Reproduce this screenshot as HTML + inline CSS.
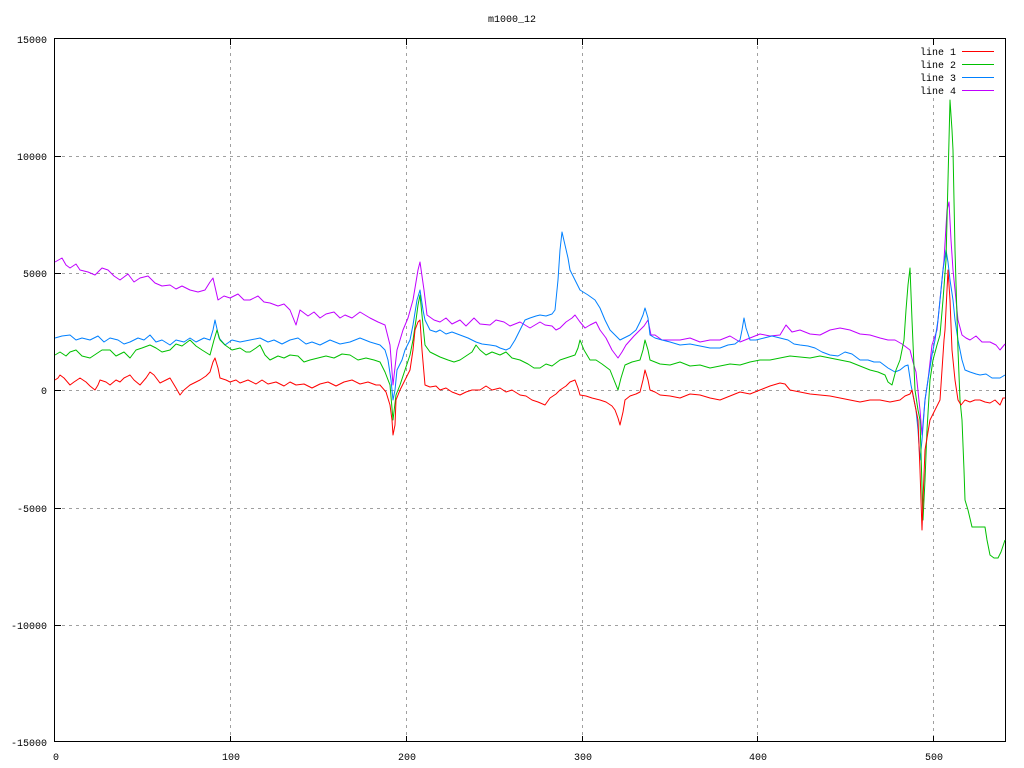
<!DOCTYPE html>
<html><head><meta charset="utf-8"><style>
html,body{margin:0;padding:0;background:#fff;}
svg{display:block;font-family:"Liberation Mono",monospace;font-size:10px;}
</style></head><body>
<svg width="1024" height="768" viewBox="0 0 1024 768" xmlns="http://www.w3.org/2000/svg">
<rect width="1024" height="768" fill="#fff"/>
<g stroke="#a0a0a0" stroke-width="1" stroke-dasharray="3,4" fill="none">
<line x1="55" y1="156.5" x2="1005" y2="156.5"/>
<line x1="55" y1="273.5" x2="1005" y2="273.5"/>
<line x1="55" y1="390.5" x2="1005" y2="390.5"/>
<line x1="55" y1="508.5" x2="1005" y2="508.5"/>
<line x1="55" y1="625.5" x2="1005" y2="625.5"/>
<line x1="230.5" y1="39" x2="230.5" y2="742"/>
<line x1="406.5" y1="39" x2="406.5" y2="742"/>
<line x1="582.5" y1="39" x2="582.5" y2="742"/>
<line x1="757.5" y1="39" x2="757.5" y2="742"/>
<line x1="933.5" y1="98" x2="933.5" y2="742"/>
</g>
<g stroke="#000" stroke-width="1" fill="none">
<rect x="54.5" y="38.5" width="951" height="703"/>
<path d="M55 156.5h6M999 156.5h6M55 273.5h6M999 273.5h6M55 390.5h6M999 390.5h6M55 508.5h6M999 508.5h6M55 625.5h6M999 625.5h6
M230.5 39v6M230.5 742v-6M406.5 39v6M406.5 742v-6M582.5 39v6M582.5 742v-6M757.5 39v6M757.5 742v-6M933.5 39v6M933.5 742v-6"/>
</g>
<g fill="#000" text-anchor="end">
<text x="47" y="43">15000</text><text x="47" y="160">10000</text><text x="47" y="277">5000</text>
<text x="47" y="394">0</text><text x="47" y="512">-5000</text><text x="47" y="629">-10000</text><text x="47" y="746">-15000</text>
</g>
<g fill="#000" text-anchor="middle">
<text x="56" y="760">0</text><text x="231" y="760">100</text><text x="407" y="760">200</text>
<text x="583" y="760">300</text><text x="758" y="760">400</text><text x="934" y="760">500</text>
<text x="512" y="22">m1000_12</text>
</g>
<g fill="#000" text-anchor="end">
<text x="956" y="55">line 1</text><text x="956" y="68">line 2</text><text x="956" y="81">line 3</text><text x="956" y="94">line 4</text>
</g>
<g stroke-width="1" fill="none">
<line x1="962" y1="51.5" x2="994" y2="51.5" stroke="#ff0000"/>
<line x1="962" y1="64.5" x2="994" y2="64.5" stroke="#00c000"/>
<line x1="962" y1="77.5" x2="994" y2="77.5" stroke="#0080ff"/>
<line x1="962" y1="90.5" x2="994" y2="90.5" stroke="#c000ff"/>
</g>
<g fill="none" stroke-width="1" stroke-linejoin="round">
<polyline stroke="#c000ff" points="55,262 62,258 66,265 70,268 76,264 80,270 88,272 95,275 102,268 108,270 114,276 120,280 128,274 134,282 140,278 148,276 155,283 162,286 170,285 176,289 182,286 190,290 198,292 205,290 210,282 213,278 218,300 224,296 230,298 238,294 244,300 250,300 258,296 264,302 270,303 278,306 284,304 290,310 296,325 300,310 308,316 314,312 320,318 326,314 334,312 340,318 345,315 352,318 360,312 370,318 378,322 385,325 390,345 393,385 397,350 403,330 408,318 413,300 418,270 420,262 424,290 427,315 434,320 440,322 446,318 452,324 460,320 466,326 474,318 480,324 490,325 496,320 504,322 510,326 520,322 530,328 540,322 545,325 552,326 556,330 560,328 566,322 572,318 575,315 580,322 585,328 590,325 596,322 600,330 606,338 612,350 618,358 622,352 626,345 634,336 640,330 644,326 648,320 651,335 655,335 662,340 670,340 680,340 690,338 700,342 710,340 720,340 730,336 740,342 750,338 760,334 770,336 780,335 786,325 792,332 800,330 810,334 820,335 830,330 840,328 850,330 860,334 870,335 880,338 888,340 895,340 902,344 910,350 913,362 916,372 920,410 922,435 925,400 928,380 932,345 937,330 940,300 944,260 947,210 949,202 951,240 953,270 956,300 958,320 962,335 966,338 970,340 976,336 982,342 990,342 996,345 1000,350 1005,344"/>
<polyline stroke="#0080ff" points="55,338 62,336 70,335 76,340 82,338 90,340 98,336 104,342 110,338 118,340 124,344 130,342 138,338 144,340 150,335 156,342 162,340 170,345 176,340 184,342 190,338 196,342 204,338 210,340 213,330 215,320 219,338 225,345 232,340 240,342 250,340 260,338 268,342 274,340 282,344 290,340 298,338 306,344 312,342 320,345 330,340 340,344 350,342 360,338 370,342 380,345 385,350 388,360 391,380 393,400 395,390 397,370 402,360 405,350 410,340 413,325 417,300 420,290 423,310 425,320 430,330 436,332 440,330 446,334 452,332 460,335 468,338 476,342 482,344 490,345 496,346 500,348 506,350 510,348 515,340 520,330 525,320 530,318 536,316 540,315 546,316 552,314 555,310 558,280 560,250 562,232 565,245 568,258 570,270 575,280 580,290 588,295 595,300 600,308 605,320 610,330 615,335 620,340 626,337 630,335 636,330 640,322 643,315 645,308 648,318 650,335 655,338 662,340 670,342 680,345 690,344 700,346 710,348 720,348 728,345 735,344 740,340 742,330 744,318 746,328 750,340 756,340 764,338 772,336 780,338 788,340 794,344 800,345 808,346 815,348 822,352 830,355 838,356 845,352 852,354 860,360 868,360 874,362 880,362 888,368 895,372 900,370 905,366 908,365 911,385 914,400 916,410 918,430 920,460 922,440 925,400 928,380 932,355 935,340 938,320 940,300 943,270 946,250 948,262 950,280 953,300 955,320 958,340 962,360 965,370 970,372 976,374 980,375 986,374 992,378 1000,378 1005,375"/>
<polyline stroke="#00c000" points="55,355 60,352 66,356 70,352 76,350 82,356 90,358 96,354 102,350 110,350 116,356 124,352 130,358 136,350 142,348 150,345 156,348 162,352 170,350 176,344 182,346 190,340 196,346 202,350 210,355 214,340 217,330 220,340 225,345 232,350 240,348 246,352 250,352 256,348 260,345 265,355 270,360 278,356 284,358 290,355 298,356 304,362 310,360 318,358 326,356 334,358 342,354 350,355 358,360 366,358 374,360 380,362 385,372 390,385 393,420 396,395 400,385 405,370 410,355 413,340 416,320 418,305 420,295 423,325 425,345 430,352 436,355 440,357 448,360 454,362 460,360 466,356 472,352 476,345 480,350 486,355 492,352 500,355 506,352 512,358 520,360 528,364 534,368 540,368 546,364 552,366 560,360 566,358 572,356 575,355 578,348 580,340 584,350 590,360 596,360 602,364 610,370 614,380 618,390 621,378 625,365 632,362 640,360 643,350 645,340 648,350 650,360 660,364 670,365 680,362 690,366 700,365 710,368 720,366 730,364 740,365 750,362 760,360 770,360 780,358 790,356 800,357 810,358 820,356 830,358 840,360 850,362 860,366 870,370 878,372 885,375 888,382 892,385 896,370 900,360 904,340 906,310 908,285 910,268 912,320 915,390 918,410 920,420 923,520 925,480 927,430 930,380 933,360 937,345 940,335 943,300 946,260 948,180 950,100 952,130 953,150 955,250 958,350 960,400 962,420 964,470 965,500 968,510 972,527 980,527 985,527 987,540 990,555 994,558 998,558 1001,552 1005,540"/>
<polyline stroke="#ff0000" points="55,380 58,378 60,375 64,378 70,385 74,382 80,378 86,382 90,386 95,390 98,385 100,380 106,382 110,385 116,380 120,382 124,378 130,375 134,380 140,385 146,378 150,372 154,375 160,383 166,380 170,378 176,388 180,395 184,390 190,385 196,382 200,380 206,376 210,372 213,362 215,358 218,368 220,378 226,380 230,382 236,380 240,383 248,380 256,384 262,380 268,384 276,382 284,386 290,382 296,385 304,384 312,388 320,384 328,382 336,386 344,382 352,380 360,384 368,382 376,385 380,385 386,392 390,405 392,420 393,435 395,425 396,400 400,390 405,380 410,370 413,350 415,330 418,322 420,320 422,350 425,385 430,387 436,386 440,390 446,388 452,392 460,395 466,392 472,390 480,390 486,386 492,390 500,388 506,392 512,390 520,395 526,396 532,400 538,402 545,405 550,398 556,394 560,390 566,386 570,382 575,380 578,388 580,395 586,396 592,398 600,400 606,402 612,406 615,410 618,418 620,425 623,412 625,400 630,396 636,394 640,392 643,380 645,370 648,380 650,390 655,392 660,395 670,396 680,398 690,394 700,395 710,398 720,400 730,396 740,392 750,394 760,390 770,386 780,383 785,384 790,390 800,392 810,394 820,395 830,396 840,398 850,400 860,402 870,400 880,400 890,402 900,400 905,396 910,394 912,390 914,400 916,410 918,420 920,470 922,530 923,500 925,450 928,432 930,420 935,410 940,400 942,370 944,340 945,330 947,290 948,270 950,300 952,350 955,380 958,400 961,405 965,400 970,402 975,400 980,400 985,402 990,403 995,400 1000,405 1003,398 1005,398"/>
</g>
</svg>
</body></html>
